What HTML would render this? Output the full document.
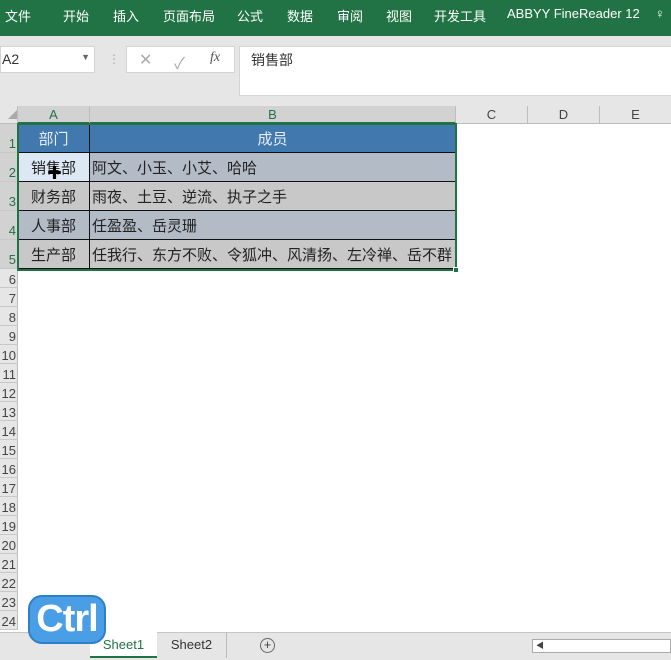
<!DOCTYPE html>
<html><head><meta charset="utf-8"><style>
*{margin:0;padding:0;box-sizing:border-box}
body{width:671px;height:660px;overflow:hidden;background:#fff;font-family:"Liberation Sans","Noto Sans CJK SC",sans-serif;position:relative}
.abs{position:absolute}
.rib{left:0;top:0;width:671px;height:36px;background:#217346;color:#fff;font-size:13px}
.rib span{position:absolute;top:6px;white-space:nowrap}
.fbar{left:0;top:36px;width:671px;height:70px;background:#e6e6e6}
.box{background:#fff;border:1px solid #d4d4d4}
.colh{top:106px;height:18px;background:#e6e6e6;border-bottom:1px solid #bdbdbd;font-size:13px;color:#444;text-align:center;line-height:18px}
.rowh{left:0;width:18px;background:#e6e6e6;border-right:1px solid #bdbdbd;border-bottom:1px solid #c8c8c8;font-size:13px;color:#444;text-align:right;padding-right:1px;overflow:hidden}
.cell{font-size:15px;color:#222;line-height:31px;height:29px;border-right:1.5px solid #111;border-bottom:1.5px solid #111;white-space:nowrap;overflow:hidden}
</style></head><body>
<div class="abs rib">
<span style="left:5px">文件</span><span style="left:63px">开始</span><span style="left:113px">插入</span><span style="left:163px">页面布局</span><span style="left:237px">公式</span><span style="left:287px">数据</span><span style="left:337px">审阅</span><span style="left:386px">视图</span><span style="left:434px">开发工具</span><span style="left:507px">ABBYY FineReader 12</span><span style="left:655px">♀</span>
</div>
<div class="abs fbar"></div>
<div class="abs box" style="left:0;top:46px;width:95px;height:27px;font-size:14px;color:#333;padding:4px 0 0 1px">A2<span style="position:absolute;right:4px;top:5px;font-size:9px;color:#666">▼</span></div>
<div class="abs" style="left:108px;top:52px;color:#aaa;font-size:12px">⋮</div>
<div class="abs box" style="left:126px;top:46px;width:109px;height:27px;color:#aaa;font-size:16px"><span style="position:absolute;left:12px;top:3px">✕</span><span style="position:absolute;left:47px;top:3px">✓</span><span style="position:absolute;left:83px;top:3px;font-family:'Liberation Serif';font-style:italic;font-size:14px;color:#555">fx</span></div>
<div class="abs box" style="left:239px;top:46px;width:440px;height:50px;font-size:14px;color:#333;padding:3px 0 0 11px">销售部</div>
<div class="abs" style="left:0;top:106px;width:671px;height:18px;background:#e6e6e6"></div>
<div class="abs colh" style="left:0;width:18px;border-right:1px solid #bdbdbd;color:#aaa;font-size:9px;text-align:right">◢</div>
<div class="abs colh" style="left:18px;width:72px;background:#d2d2d2;border-right:1px solid #bdbdbd;border-bottom:2px solid #217346;color:#217346">A</div>
<div class="abs colh" style="left:90px;width:366px;background:#d2d2d2;border-right:1px solid #bdbdbd;border-bottom:2px solid #217346;color:#217346">B</div>
<div class="abs colh" style="left:456px;width:72px;border-right:1px solid #bdbdbd">C</div>
<div class="abs colh" style="left:528px;width:72px;border-right:1px solid #bdbdbd">D</div>
<div class="abs colh" style="left:600px;width:71px">E</div>
<div class="abs rowh" style="top:124px;height:29px;line-height:40px;background:#d2d2d2;color:#217346">1</div>
<div class="abs rowh" style="top:153px;height:29px;line-height:40px;background:#d2d2d2;color:#217346">2</div>
<div class="abs rowh" style="top:182px;height:29px;line-height:40px;background:#d2d2d2;color:#217346">3</div>
<div class="abs rowh" style="top:211px;height:29px;line-height:40px;background:#d2d2d2;color:#217346">4</div>
<div class="abs rowh" style="top:240px;height:29px;line-height:40px;background:#d2d2d2;color:#217346">5</div>
<div id="rh"></div>
<div class="abs cell" style="left:18px;top:124px;width:72px;background:#4179ae;color:#e8eef6;text-align:center">部门</div>
<div class="abs cell" style="left:90px;top:124px;width:366px;background:#4179ae;color:#e8eef6;text-align:center">成员</div>
<div class="abs cell" style="left:18px;top:153px;width:72px;background:#dce8f4;text-align:center">销售部</div>
<div class="abs cell" style="left:90px;top:153px;width:366px;background:#b3bbc7;padding-left:2px">阿文、小玉、小艾、哈哈</div>
<div class="abs cell" style="left:18px;top:182px;width:72px;background:#c8c8c8;text-align:center">财务部</div>
<div class="abs cell" style="left:90px;top:182px;width:366px;background:#c8c8c8;padding-left:2px">雨夜、土豆、逆流、执子之手</div>
<div class="abs cell" style="left:18px;top:211px;width:72px;background:#b3bbc7;text-align:center">人事部</div>
<div class="abs cell" style="left:90px;top:211px;width:366px;background:#b3bbc7;padding-left:2px">任盈盈、岳灵珊</div>
<div class="abs cell" style="left:18px;top:240px;width:72px;background:#c8c8c8;text-align:center">生产部</div>
<div class="abs cell" style="left:90px;top:240px;width:366px;background:#c8c8c8;padding-left:2px">任我行、东方不败、令狐冲、风清扬、左冷禅、岳不群</div>
<div class="abs" style="left:17px;top:123px;width:440px;height:148px;border:2px solid #217346"></div>
<div class="abs" style="left:453px;top:267px;width:6px;height:6px;background:#217346;border:1px solid #fff"></div>
<div class="abs" style="left:47px;top:162px;font-size:15px;color:#000">✚</div>
<div class="abs" style="left:0;top:632px;width:671px;height:28px;background:#e6e6e6;border-top:1px solid #c6c6c6"></div>
<div class="abs" style="left:90px;top:632px;width:67px;height:26px;background:#fff;border-bottom:2px solid #217346;color:#217346;font-size:13px;text-align:center;line-height:26px">Sheet1</div>
<div class="abs" style="left:157px;top:632px;width:70px;height:26px;font-size:13px;color:#333;text-align:center;line-height:26px;border-right:1px solid #bbb">Sheet2</div>
<div class="abs" style="left:260px;top:638px;width:15px;height:15px;border:1px solid #666;border-radius:50%;font-size:13px;line-height:12px;text-align:center;color:#444">+</div>
<div class="abs" style="left:532px;top:639px;width:139px;height:14px;background:#fff;border:1px solid #aaa;font-size:8px;color:#444;padding-left:3px;line-height:12px">◀</div>
<div class="abs" style="left:28px;top:595px;width:78px;height:49px;background:#4a9ee6;border:2px solid #2f7fc8;border-radius:14px;color:#fff;font-size:38px;font-weight:bold;line-height:44px;text-align:center;letter-spacing:-1px">Ctrl</div>
<script>
var h='';for(var i=6;i<=24;i++){var t=269+(i-6)*19;h+='<div class="abs rowh" style="top:'+t+'px;height:19px;line-height:21px">'+i+'</div>';}
document.getElementById('rh').innerHTML=h;
</script>
</body></html>
